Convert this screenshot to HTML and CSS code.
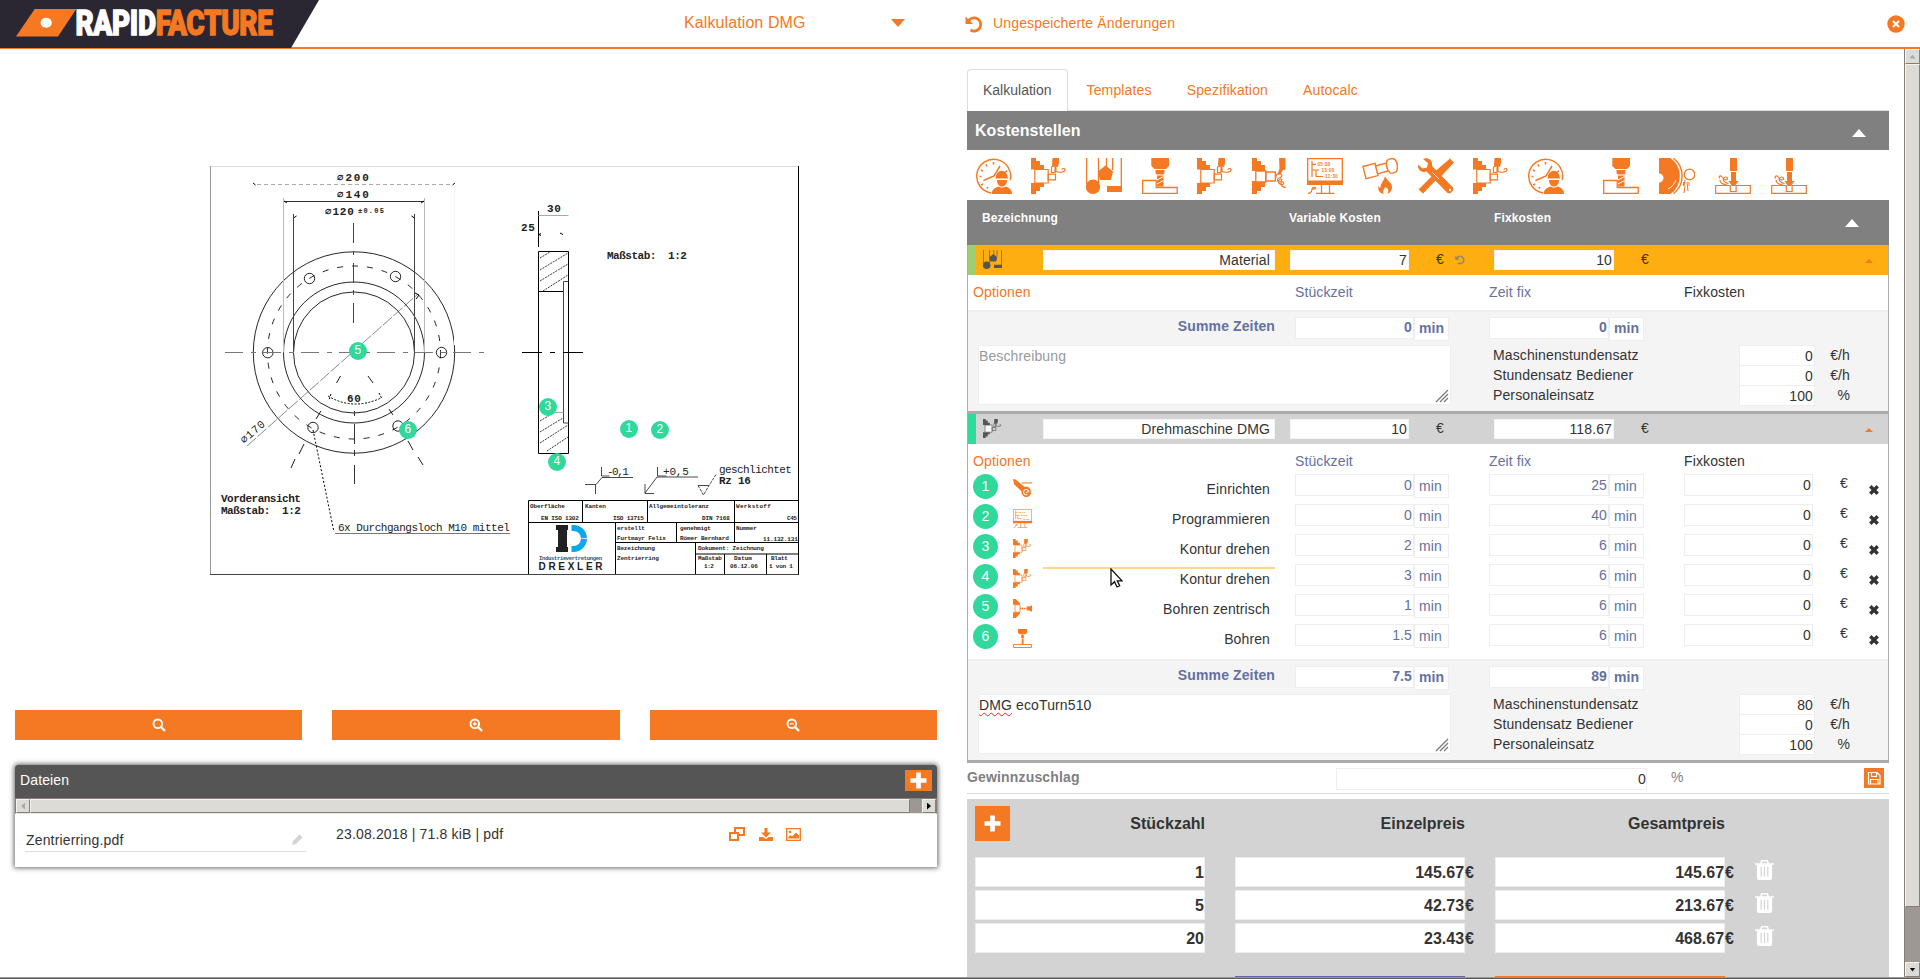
FILE: index.html
```html
<!DOCTYPE html>
<html lang="de">
<head>
<meta charset="utf-8">
<title>Rapidfacture – Kalkulation DMG</title>
<link rel="stylesheet" href="styles.css">
</head>
<body>
<svg class="sprite" aria-hidden="true">
  <symbol id="i-clock" viewBox="0 0 36 36">
    <path d="M15 35A17 17 0 1 1 34.300 22" fill="none" stroke="currentColor" stroke-width="1.400"/>
    <path d="M7.500 22.500 18 18 24 8" fill="none" stroke="currentColor" stroke-width="1.500"/>
    <path d="M17.500 4v2.500M10 6.500l1 2M5 12l2 1M3.500 18.500h2M5 27l2-1M11 30.500l1-1.500M31 13l-2 1" stroke="currentColor" stroke-width="1.600"/>
    <path d="M20 19a5.500 6 0 0 1 11.500 0l.8 1.500h-13zM21 22h10c0 4-2 6.500-5 6.500s-5-2.500-5-6.500zM15.500 36c.5-5 4-6.500 7-7.500 2 1.500 5 1.500 7 0 4 1 6.500 3 6.500 7.500z" fill="currentColor"/>
  </symbol>
  <symbol id="i-turn" viewBox="0 0 36 36">
    <path d="M0 0h5v3h4v4h4v4.500H0zM0 36h5v-3h4v-4h4v-4H0zM21.500 0h6.500v5l-1 4-3-1-2 1-1-2z" fill="currentColor"/>
    <path d="M3.800 11.500h13.400v13.500H3.800z" fill="#fff" fill-opacity=".85" stroke="currentColor" stroke-width="1.200"/>
    <path d="M17.200 16.200h7.300v5.600h-7.300zM20.500 14.500V9l3.500-2v7.500zM25 8v5M24 13c4 2 10 1.500 10-1.200 0-2-3-1.500-3 0" fill="none" stroke="currentColor" stroke-width="1.200"/>
  </symbol>
  <symbol id="i-turn2" viewBox="0 0 36 36">
    <path d="M0 0h5v3h4v4h4v6H0zM0 36h5v-3h4v-4h4v-6H0zM27-1.500h6.500v13l-3 1-2 4h-3l2-6z" fill="currentColor"/>
    <path d="M3.800 13h10v11h-10z" fill="#fff" stroke="currentColor" stroke-width="1.300"/><path d="M13.800 14h9.500v9h-9.500z" fill="none" stroke="currentColor" stroke-width="1.300"/>
    <path d="M24 20c-1-4 3-5 5-4s0 4-2 4-2 4 0 4 4-3 2-3-4 3-1 5 5-1 3-2-3 2-1 4 4 1 4 1" fill="none" stroke="currentColor" stroke-width="1.200"/>
  </symbol>
  <symbol id="i-material" viewBox="0 0 36 36">
    <path d="M.7 0v26M12.500 0v25M20.500 0v10M26.700 0v12M35.300 0v30" stroke="currentColor" stroke-width="1.300"/>
    <circle cx="7" cy="28.800" r="7.200" fill="currentColor"/>
    <path d="M19.500 7.500l7.500 6-2 8.500H14L12 13.500zM21 28h15v6H21z" fill="currentColor"/>
  </symbol>
  <symbol id="i-mill" viewBox="0 0 36 36">
    <path d="M9.300 0h17.700v8l-3 3H12.500l-3.200-3zM13.500 12h9v3l-1 1.500h-7l-1-1.500zM15 17.500h6.500v11H15z" fill="currentColor"/>
    <path d="M15 22l6.500-3.500M15 26l6.500-3.500" stroke="#fff" stroke-width="1"/>
    <path d="M.7 22.500h13.500v7h21v5.800H.7z" fill="none" stroke="currentColor" stroke-width="1.300"/>
  </symbol>
  <symbol id="i-monitor" viewBox="0 0 36 36">
    <path d="M.7.7h34.600v25H.7z" fill="none" stroke="currentColor" stroke-width="1.300"/>
    <path d="M0 22.500h36v4.500H0z" fill="currentColor"/>
    <path d="M5 3v16M5 6.300h4M5 12h7M9 12v6.500h7M14.500 27v8M22.500 27v8M9 35.300h18.500M1 35.300c6 0 2-6 6-6s0 3-2 1" fill="none" stroke="currentColor" stroke-width="1.200"/>
    <g fill="currentColor" font-family="Liberation Sans" font-weight="700" font-size="4.600">
      <text x="10.500" y="8.200" textLength="13">05:00</text><text x="14.500" y="14" textLength="13">13:00</text><text x="18" y="20.200" textLength="13">11:30</text>
    </g>
  </symbol>
  <symbol id="i-heat" viewBox="0 0 36 36">
    <path d="M1 8.500l12-3.200 3 12.300-12 3zM13.500 8l10.500-3 2 8-10.500 3zM25 2.500C28 0 31 .5 33 1.500c3 4 3 8 1.500 12-2 1.500-4 2-6.500 1.300-3-3-4-8-3-12.300z" fill="none" stroke="currentColor" stroke-width="1.400"/>
    <path d="M23 18c1 4 8 7 7 12-.5 3-2 5-4.500 6 2-4 0-6-2-7-2 2-3 4-2 7-4-1-6-4-5-8 .5 1 1 2 2 2-.5-4 3.500-7 4.500-12z" fill="currentColor"/>
  </symbol>
  <symbol id="i-tools" viewBox="0 0 36 36">
    <path d="M5 1c5-2.500 10 1 9 7l21 21.500c1.500 3-2.500 7-5.500 5.500L8.500 13.500C4 15-.5 12 0 6.500l4.500 4 4.500-1 1-4.500z" fill="currentColor"/>
    <path d="M32 .5l4 4L22.500 19l-2 .5L5 35.500.5 31.500 16.500 15.500l.5-2z" fill="currentColor"/>
    <path d="M14.500 14.500l6.500 6.500" stroke="#fff" stroke-width=".8"/>
    <circle cx="32" cy="32" r="1.200" fill="#fff"/>
  </symbol>
  <symbol id="i-grind" viewBox="0 0 36 36">
    <path d="M0 0h11.500a22 22 0 0 1 0 36H0V24.500a4.500 4.500 0 0 0 0-9z" fill="currentColor"/>
    <path d="M14.500 .3a22.500 22.500 0 0 1 0 35.400" fill="none" stroke="currentColor" stroke-width="1.400"/>
    <path d="M17 22c-1.500 4-4 7-8 9" fill="none" stroke="#fff" stroke-width=".9"/>
    <circle cx="30.500" cy="16.500" r="5.300" fill="none" stroke="currentColor" stroke-width="1.300"/>
    <path d="M26 22l-1 6M28 24l1 9M26 28l-1 7M24.500 24l0 4M30 24v4" fill="none" stroke="currentColor" stroke-width="1"/>
  </symbol>
  <symbol id="i-groove" viewBox="0 0 36 36">
    <path d="M15 0h7v13h-7zM16 14h5v9h-5zM13.500 23h10l-3.500 5h-3z" fill="currentColor"/>
    <path d="M.7 27.500h14.600v6h5.800v-6h14.200v7.800H.7zM13.500 25.500c-4-1-6-3-5-5s4-2 4 0-3 2-5-1-4-1-3 1M12 26c-4 1-7-1-7-4" fill="none" stroke="currentColor" stroke-width="1.200"/>
  </symbol>
  <symbol id="i-setup" viewBox="0 0 36 36">
    <path d="M0 0l5 1 17 14c7-1 12 3 12 10 0 6-4 9-8 9-6 0-10-4-10-11L2 10z" fill="currentColor"/>
    <path d="M17 7.500h19" fill="none" stroke="currentColor" stroke-width="2"/>
    <path d="M30 25a5 5 0 1 0-3 4.500M25 26l3-2" fill="none" stroke="#fff" stroke-width="2"/>
  </symbol>
  <symbol id="i-centre" viewBox="0 0 36 36">
    <path d="M0 0h5l8 8v3H0zM0 36h5l8-8v-3H0zM36 12v12l-5-2h-5v-8h5z" fill="currentColor"/>
    <path d="M3.800 11h9.500v14H3.800z" fill="none" stroke="currentColor" stroke-width="1.400"/>
    <path d="M13 18h13" stroke="currentColor" stroke-width="3" stroke-dasharray="3 1"/>
  </symbol>
  <symbol id="i-drill" viewBox="0 0 36 36">
    <path d="M9.300 0h17.700v7l-3 3H12.500l-3.200-3zM15.500 11h5v6h-5zM16.500 18h3.500v11h-3.500z" fill="currentColor"/>
    <path d="M1 29.500h34v5.500H1z" fill="none" stroke="currentColor" stroke-width="1.800"/>
  </symbol>
  <symbol id="i-undo" viewBox="0 0 18 18">
    <path d="M3 6.500A6.600 6.600 0 1 1 5.500 14.500" fill="none" stroke="currentColor" stroke-width="2.700"/>
    <path d="M.5 1v7.500H8z" fill="currentColor"/>
  </symbol>
  <symbol id="i-x" viewBox="0 0 10 10"><path d="M1.300 1.300l7.400 7.400M8.700 1.300L1.300 8.700" stroke="currentColor" stroke-width="3.400"/></symbol>
  <symbol id="i-plus" viewBox="0 0 18 18"><path d="M9 .5v17M.5 9h17" stroke="currentColor" stroke-width="5"/></symbol>
  <symbol id="i-trash" viewBox="0 0 20 22">
    <path d="M2 5h16v14.500a2 2 0 0 1-2 2H4a2 2 0 0 1-2-2z" fill="currentColor"/>
    <path d="M0 4.800h20M6 4.500l1-3.200h6l1 3.200" fill="none" stroke="currentColor" stroke-width="1.600"/>
    <path d="M6.500 7.500v10.500M10 7.500v10.500M13.500 7.500v10.500" stroke="#d3d3d3" stroke-width="1.200"/>
  </symbol>
  <symbol id="i-zoom" viewBox="0 0 14 14"><circle cx="5.800" cy="5.800" r="4.300" fill="none" stroke="currentColor" stroke-width="1.900"/><path d="M9 9l4 4" stroke="currentColor" stroke-width="2.400"/></symbol>
  <symbol id="i-grip" viewBox="0 0 14 14"><path d="M1 13L13 1M5 13l8-8M9 13l4-4" stroke="#777" stroke-width="1.200"/></symbol>
</svg>

<header class="topbar">
  <svg class="logo" width="320" height="48" viewBox="0 0 320 48">
    <path d="M0 0h319L291 48H0z" fill="#2a2732"/>
    <path d="M34.700 9H76.300L58 36.500H16z" fill="#f57822"/>
    <ellipse cx="46.200" cy="22.800" rx="5.600" ry="5" fill="#fff"/>
    <text class="logo-text" x="75.500" y="35.300" textLength="197" lengthAdjust="spacingAndGlyphs" fill="#fff" stroke="#fff">RAPID<tspan fill="#f57822" stroke="#f57822">FACTURE</tspan></text>
  </svg>
  <div class="calc-name">Kalkulation DMG</div>
  <span class="caret-down"></span>
  <svg class="undo-big"><use href="#i-undo"/></svg>
  <span class="unsaved">Ungespeicherte Änderungen</span>
  <svg class="close" viewBox="0 0 18 18"><circle cx="9" cy="9" r="8.700" fill="#f57822"/><path d="M6 6l6 6M12 6l-6 6" stroke="#fff" stroke-width="2.300"/></svg>
</header>

<main class="page">
  <section class="left">
    <div class="sheet">
      <svg class="drawing" width="620" height="420" viewBox="200 160 620 420">
        <g fill="none" stroke="#000" stroke-width="1">
          <path d="M210.500 166.500H798.500" stroke="#ddd"/><path d="M210.500 166v408" stroke="#999"/><path d="M210 574.500H799" stroke="#444"/><path d="M798.500 166v408.500"/>
          <g stroke-width=".85"><circle cx="354" cy="352.500" r="100.700"/><circle cx="354" cy="352.500" r="70.500"/><circle cx="354" cy="352.500" r="60.500"/>
          <circle cx="354" cy="352.500" r="86.500" stroke-dasharray="6 9"/>
          <circle cx="309.500" cy="278.500" r="5.200"/><circle cx="395.500" cy="276.500" r="5.200"/><circle cx="267.800" cy="352.700" r="5.200"/><circle cx="441.500" cy="352.500" r="5.200"/><circle cx="313" cy="427.500" r="5.200"/><circle cx="398" cy="426" r="5.200"/></g>
          <path d="M225 352.500H485" stroke="#777" stroke-dasharray="18 8 5 7"/>
          <path d="M353.500 223v20M353.500 251v4M353.500 263v20M353.500 290v5M353.500 303v20" stroke="#444"/><path d="M354.500 411v5M354.500 424v20M354.500 450v6M354.500 465v19" stroke="#333"/>
          <path d="M257 184.500h195" stroke="#aaa" stroke-dasharray="4 3"/><path d="M283.500 201.500H424.500" stroke="#333"/>
          <path d="M283.500 198V352M424.500 198V352" stroke="#bbb"/><path d="M293.500 214V352M414.500 214V352" stroke="#444"/><path d="M454.500 186V345" stroke="#f8f8f8"/>
          <path d="M247 446L418 294" stroke="#555" stroke-width=".7" stroke-dasharray="12 2"/>
          <path d="M415 293l4 2-3 4M293.500 218l3-2M414.500 218l-3-2M253 183l2.500 2M455 183l-2.500 2M287 203l-3-2M421 203l3-2"/>
          <path d="M340.500 376l-4 7M368 376l5 7M321 411l-5 8M389 409l4 6M304 444l-5 10M295 459l-4 9M408 441l5 9M418 457l5 8" stroke-width=".9"/>
          <path d="M328 396q25 15 53 2M331 394l-2 6M379 393l3 6" stroke-dasharray="2 1.500"/>
          <path d="M313 430L334 532" stroke-dasharray="2 2"/><path d="M335 533.500H510" stroke="#777"/>
          <path d="M538.500 251.500h30v202h-30zM538.500 291.500h25M538.500 211v36"/><path d="M568.500 281.500h-5V423h5" stroke="#444"/><path d="M538.500 215.500h30" stroke="#aaa"/>
          <path d="M563.500 412.500h-14" stroke="#aaa"/>
          <path d="M540 258l10-6M540 270l28-17M540 281l28-17M543 291l25-16M540 421l10-6M540 432l23-14M540 443l28-18M547 451l21-14" stroke-width=".8" stroke-dasharray="2 1"/>
          <path d="M522 352.500h20M550 352.500h5M563 352.500h20M541 233.500l-2 1 2 1M560 233l3 1.500"/>
          <g stroke="#333" stroke-width=".9"><path d="M585 484.500h11l6-7h31M595.500 485v9M601.500 467v9h8M645 493l12-16h41M645 484v9.500h9M657.500 467v9h9"/>
          <path d="M698 485.500h11"/><path d="M698 485.500l5.500 9.500 5.500-9.500 7-11" stroke-dasharray="3 1"/></g>
          <path d="M528.500 574V500.500H798M528.500 522.500H798M582.500 500v22M647.500 500v22M734.500 500v42.500M615.500 522v52M676.500 522v20M615.500 542.500H798M695.500 542v32M695.500 554H798M724.500 554v20M766.500 554v20"/>
        </g>
        <g class="cad">
          <text x="337" y="181" textLength="32">∅200</text><text x="337" y="198" textLength="32">∅140</text><text x="325" y="214.500" textLength="29">∅120</text><text class="cad-s" x="358" y="213" textLength="26">±0.05</text>
          <text x="347" y="401.500" textLength="14">60</text><text x="0" y="0" textLength="29" transform="translate(244 444) rotate(-41)" class="cad-l">∅170</text>
          <text x="547" y="212" textLength="14">30</text><text x="521" y="231" textLength="14">25</text>
          <text x="221" y="501.500" textLength="80">Vorderansicht</text><text x="221" y="514" textLength="80" xml:space="preserve">Maßstab:  1:2</text>
          <text x="607" y="258.500" textLength="80" xml:space="preserve">Maßstab:  1:2</text>
          <text class="cad-l" x="338" y="531" textLength="172">6x Durchgangsloch M10 mittel</text>
          <text class="cad-l" x="607" y="474.500" textLength="22">-0,1</text><text class="cad-l" x="663" y="474.500" textLength="26">+0,5</text>
          <text class="cad-l" x="719" y="472.500" textLength="73">geschlichtet</text><text x="719" y="484" textLength="32">Rz 16</text>
        </g>
        <g class="cad tb">
          <text x="530" y="507.500" textLength="35">Oberfläche</text><text x="541" y="519.500" textLength="38">EN ISO 1302</text>
          <text x="585" y="507.500" textLength="21">Kanten</text><text x="613" y="519.500" textLength="31">ISO 13715</text>
          <text x="649" y="507.500" textLength="60">Allgemeintoleranz</text><text x="702" y="519.500" textLength="28">DIN 7168</text>
          <text x="736" y="507.500" textLength="35">Werkstoff</text><text x="787" y="519.500" textLength="10">C45</text>
          <text x="617" y="529.500" textLength="28">erstellt</text><text x="617" y="539.500" textLength="49">Furtmayr Felix</text>
          <text x="680" y="529.500" textLength="31">genehmigt</text><text x="680" y="539.500" textLength="49">Römer Bernhard</text>
          <text x="736" y="529.500" textLength="21">Nummer</text><text x="763" y="540.500" textLength="35">11.132.131</text>
          <text x="617" y="549.500" textLength="38">Bezeichnung</text><text x="617" y="560" textLength="42">Zentrierring</text>
          <text x="698" y="549.500" textLength="66">Dokument: Zeichnung</text>
          <text x="698" y="560" textLength="24">Maßstab</text><text x="704" y="568" textLength="10">1:2</text>
          <text x="734" y="560" textLength="18">Datum</text><text x="730" y="568" textLength="28">06.12.06</text>
          <text x="771" y="560" textLength="17">Blatt</text><text x="769" y="568" textLength="24">1 von 1</text>
        </g>
        <path d="M556 525h12v5h-1v17h1v5h-12v-5h2v-17h-2z" fill="#222"/>
        <path d="M571.500 528h2a10.500 10.500 0 0 1 0 21h-2" fill="none" stroke="#0aa9ea" stroke-width="6" stroke-dasharray="18 .8 30"/>
        <text x="539" y="560" class="dx-s" textLength="63">Industrievertretungen</text><text x="538.500" y="569.500" class="dx" textLength="64">DREXLER</text>
      </svg>
      <span class="pin pin-5">5</span><span class="pin pin-6">6</span><span class="pin pin-3">3</span><span class="pin pin-4">4</span><span class="pin pin-1">1</span><span class="pin pin-2">2</span>
    </div>
    <div class="zoom-row">
      <button class="zoom"><svg><use href="#i-zoom"/></svg></button>
      <button class="zoom"><svg viewBox="0 0 14 14"><use href="#i-zoom"/><path d="M5.800 3.800v4M3.800 5.800h4" stroke="#fff" stroke-width="1.200"/></svg></button>
      <button class="zoom"><svg viewBox="0 0 14 14"><use href="#i-zoom"/><path d="M3.800 5.800h4" stroke="#fff" stroke-width="1.200"/></svg></button>
    </div>
    <div class="files">
      <div class="files-head"><span>Dateien</span><button class="add-file"><svg><use href="#i-plus"/></svg></button></div>
      <div class="hscroll"><i class="sb-btn"><b class="arr-l"></b></i><i class="sb-thumb"></i><i class="sb-btn"><b class="arr-r"></b></i></div>
      <div class="file">
        <div class="file-name">Zentrierring.pdf<svg width="11" height="11" viewBox="0 0 11 11"><path d="M0 11l1-4 6.500-6.500 3 3L4 10z" fill="#d4d4d4"/></svg></div>
        <div class="file-meta">23.08.2018 | 71.8 kiB | pdf</div>
        <div class="file-actions">
          <svg width="16" height="14" viewBox="0 0 16 14"><path d="M6 1h9v7H6z" fill="#fff" stroke="#f57822" stroke-width="2"/><path d="M1 6h8v7H1z" fill="#fff" stroke="#f57822" stroke-width="2"/></svg>
          <svg width="14" height="13" viewBox="0 0 14 13"><path d="M5.500 0h3v4.500H12L7 9.500 2 4.500h3.500zM0 9h4l3 2 3-2h4v4H0z" fill="#f57822"/></svg>
          <svg width="15" height="13" viewBox="0 0 15 13"><path d="M.7.700h13.600v11.600H.7z" fill="none" stroke="#f57822" stroke-width="1.300"/><circle cx="4" cy="4" r="1.300" fill="#f57822"/><path d="M2.500 10.500V9l2-2 1.500 1.500 4-4 3 3v3z" fill="#f57822"/></svg>
        </div>
      </div>
    </div>
  </section>

  <section class="right">
    <nav class="tabs"><a class="tab active">Kalkulation</a><a class="tab">Templates</a><a class="tab">Spezifikation</a><a class="tab">Autocalc</a></nav>
    <div class="bar"><span>Kostenstellen</span><i class="caret-up"></i></div>
    <div class="machines">
      <svg><use href="#i-clock"/></svg><svg><use href="#i-turn"/></svg><svg><use href="#i-material"/></svg><svg><use href="#i-mill"/></svg><svg><use href="#i-turn"/></svg><svg><use href="#i-turn2"/></svg><svg><use href="#i-monitor"/></svg><svg><use href="#i-heat"/></svg><svg><use href="#i-tools"/></svg><svg><use href="#i-turn"/></svg><svg><use href="#i-clock"/></svg><svg class="split"><use href="#i-mill"/></svg><svg class="wide"><use href="#i-grind"/></svg><svg class="wide"><use href="#i-groove"/></svg><svg class="wide"><use href="#i-groove"/></svg>
    </div>
    <div class="thead"><span>Bezeichnung</span><span>Variable Kosten</span><span>Fixkosten</span><i class="caret-up"></i></div>

    <article class="centre">
      <div class="chead material"><svg class="cicon"><use href="#i-material"/></svg><div class="inp title">Material</div><div class="inp c4">7</div><div class="unit">€<svg class="undo"><use href="#i-undo"/></svg></div><div class="inp c6">10</div><div class="unit">€<i class="caret-s"></i></div></div>
      <div class="opts short"><a>Optionen</a><span class="blue k5">Stückzeit</span><span class="blue k8">Zeit fix</span><span class="k11">Fixkosten</span></div>
      <div class="sum">
        <div class="sumrow"><span class="sumlabel">Summe Zeiten</span><div class="inp t1">0</div><div class="min m1">min</div><div class="inp t2">0</div><div class="min m2">min</div></div>
        <div class="detail"><div class="area ph">Beschreibung<svg><use href="#i-grip"/></svg></div>
          <div class="rates"><span>Maschinenstundensatz</span><div class="inp">0</div><em>€/h</em><span>Stundensatz Bediener</span><div class="inp">0</div><em>€/h</em><span>Personaleinsatz</span><div class="inp">100</div><em>%</em></div></div>
      </div>
    </article>

    <article class="centre">
      <div class="chead lathe"><svg class="cicon"><use href="#i-turn"/></svg><div class="inp title">Drehmaschine DMG</div><div class="inp c4">10</div><div class="unit">€</div><div class="inp c6">118.67</div><div class="unit">€<i class="caret-s"></i></div></div>
      <div class="opts"><a>Optionen</a><span class="blue k5">Stückzeit</span><span class="blue k8">Zeit fix</span><span class="k11">Fixkosten</span></div>
      <div class="ops">
        <div class="op"><b class="num">1</b><svg class="oicon"><use href="#i-setup"/></svg><span class="oname">Einrichten</span><div class="inp t1">0</div><div class="min m1">min</div><div class="inp t2">25</div><div class="min m2">min</div><div class="inp t3">0</div><span class="eur">€</span><svg class="del"><use href="#i-x"/></svg></div>
        <div class="op"><b class="num">2</b><svg class="oicon"><use href="#i-monitor"/></svg><span class="oname">Programmieren</span><div class="inp t1">0</div><div class="min m1">min</div><div class="inp t2">40</div><div class="min m2">min</div><div class="inp t3">0</div><span class="eur">€</span><svg class="del"><use href="#i-x"/></svg></div>
        <div class="op"><b class="num">3</b><svg class="oicon"><use href="#i-turn"/></svg><span class="oname">Kontur drehen</span><div class="inp t1">2</div><div class="min m1">min</div><div class="inp t2">6</div><div class="min m2">min</div><div class="inp t3">0</div><span class="eur">€</span><svg class="del"><use href="#i-x"/></svg></div>
        <div class="op"><b class="num">4</b><svg class="oicon"><use href="#i-turn"/></svg><span class="oname hover">Kontur drehen<svg class="cursor" width="13" height="20" viewBox="0 0 13 20"><path d="M1 1v16l3.500-3.300L7 19l2.700-1.200-2.400-5H12z" fill="#fff" stroke="#111" stroke-width="1.300"/></svg></span><div class="inp t1">3</div><div class="min m1">min</div><div class="inp t2">6</div><div class="min m2">min</div><div class="inp t3">0</div><span class="eur">€</span><svg class="del"><use href="#i-x"/></svg></div>
        <div class="op"><b class="num">5</b><svg class="oicon"><use href="#i-centre"/></svg><span class="oname">Bohren zentrisch</span><div class="inp t1">1</div><div class="min m1">min</div><div class="inp t2">6</div><div class="min m2">min</div><div class="inp t3">0</div><span class="eur">€</span><svg class="del"><use href="#i-x"/></svg></div>
        <div class="op"><b class="num">6</b><svg class="oicon"><use href="#i-drill"/></svg><span class="oname">Bohren</span><div class="inp t1">1.5</div><div class="min m1">min</div><div class="inp t2">6</div><div class="min m2">min</div><div class="inp t3">0</div><span class="eur">€</span><svg class="del"><use href="#i-x"/></svg></div>
      </div>
      <div class="sum">
        <div class="sumrow"><span class="sumlabel">Summe Zeiten</span><div class="inp t1">7.5</div><div class="min m1">min</div><div class="inp t2">89</div><div class="min m2">min</div></div>
        <div class="detail"><div class="area"><u class="typo">DMG</u> ecoTurn510<svg><use href="#i-grip"/></svg></div>
          <div class="rates"><span>Maschinenstundensatz</span><div class="inp">80</div><em>€/h</em><span>Stundensatz Bediener</span><div class="inp">0</div><em>€/h</em><span>Personaleinsatz</span><div class="inp">100</div><em>%</em></div></div>
      </div>
    </article>

    <div class="profit"><strong>Gewinnzuschlag</strong><div class="inp">0</div><span>%</span>
      <svg class="save" width="20" height="20" viewBox="0 0 20 20"><path d="M0 0h20v20H0z" fill="#f57822"/><path d="M4.500 4.500h8.500l3 3v8.500H4.500zM7.500 4.500v4h5v-4M6.500 16v-4.500h7.500v4.500" fill="none" stroke="#fff" stroke-width="1.200"/></svg></div>
    <div class="prices">
      <div class="prow phead"><button class="add"><svg><use href="#i-plus"/></svg></button><span class="h1">Stückzahl</span><span>Einzelpreis</span><span>Gesamtpreis</span></div>
      <div class="prow"><div class="inp">1</div><div class="inp eu">145.67</div><div class="inp eu">145.67</div><svg><use href="#i-trash"/></svg></div>
      <div class="prow"><div class="inp">5</div><div class="inp eu">42.73</div><div class="inp eu">213.67</div><svg><use href="#i-trash"/></svg></div>
      <div class="prow"><div class="inp">20</div><div class="inp eu">23.43</div><div class="inp eu">468.67</div><svg><use href="#i-trash"/></svg></div>
      <div class="strips"><i></i><i class="s-purple"></i><i class="s-orange"></i></div>
    </div>
  </section>

  <aside class="vscroll"><i class="sb-btn"><b class="arr-u"></b></i><i class="sb-thumb"></i><i class="sb-btn"><b class="arr-d"></b></i></aside>
</main>
<footer class="edge"></footer>
</body>
</html>
```
FILE: styles.css
```css
* { box-sizing: border-box; }
body { margin: 0; width: 1920px; height: 979px; overflow: hidden; background: #fff; color: #333; font: 14px/20px "Liberation Sans", Arial, sans-serif; letter-spacing: .12px; }
.sprite { display: none; }
svg { display: block; flex: none; }
button { border: 0; padding: 0; background: #f57822; color: #fff; display: flex; align-items: center; justify-content: center; }

.topbar { height: 49px; border-bottom: 2px solid #f57822; display: flex; color: #f57822; }
.logo { width: 320px; margin-bottom: -1px; }
.logo-text { font: 900 35.500px Roboto, "Liberation Sans", sans-serif; letter-spacing: -.5px; stroke-width: 1.300; }
.calc-name { width: 207px; margin-left: 364px; font-size: 16px; letter-spacing: .1px; line-height: 45px; }
.caret-down { width: 14px; height: 8px; margin-top: 19px; background: #f57822; clip-path: polygon(0 0, 100% 0, 50% 100%); }
.undo-big { width: 18px; height: 19px; margin: 15px 10px 0 60px; }
.unsaved { line-height: 46px; width: 894px; letter-spacing: .16px; }
.close { width: 18px; height: 18px; margin-top: 15px; }

.page { display: flex; height: 928px; }
.left { width: 967px; flex: none; }
.sheet { position: relative; height: 661px; padding: 111px 0 0 200px; }
.cad text { font: 700 11px "Liberation Mono", monospace; fill: #222; }
.cad .cad-l { font-weight: 400; }
.cad .cad-s { font-size: 7px; }
.cad.tb text { font-size: 6px; }
.drawing .dx-s { font: 700 5.500px "Liberation Mono", monospace; fill: #26507a; letter-spacing: 0; }
.drawing .dx { font: 700 10px "Liberation Sans", sans-serif; fill: #222; letter-spacing: 0; }
.pin { position: absolute; width: 18px; height: 18px; border-radius: 50%; background: #30d99b; color: #fff; font-size: 12px; line-height: 17px; text-align: center; }
.pin-5 { left: 349px; top: 293px; } .pin-6 { left: 399px; top: 372px; }
.pin-3 { left: 539px; top: 349px; } .pin-4 { left: 548px; top: 404px; }
.pin-1 { left: 620px; top: 371px; } .pin-2 { left: 651px; top: 372px; }
.zoom-row { display: flex; gap: 30px; padding: 0 30px 0 15px; }
.zoom { flex: 1; height: 30px; }
.zoom svg { width: 14px; height: 14px; overflow: visible; }
.files { margin: 25px 30px 0 15px; height: 102px; border-radius: 3px 3px 0 0; box-shadow: 0 0 5px 1px #666; background: #fff; }
.files-head { height: 33px; background: #555; border-radius: 3px 3px 0 0; color: #fff; display: flex; justify-content: space-between; padding: 5px 5px 0; }
.add-file { width: 27px; height: 21px; }
.add-file svg { width: 17px; height: 17px; }
.hscroll { height: 16px; display: flex; background: #9d9891; border: solid #877f73; border-width: 1px 1px 0; border-bottom: 1px solid #e8e6e3; }
.sb-btn { width: 14px; height: 14px; background: #dcdbd6; border: 1px solid; border-color: #f4f3f0 #877f73 #877f73 #f4f3f0; display: flex; align-items: center; justify-content: center; }
.sb-thumb { background: #dcdbd6; border: 1px solid; border-color: #f4f3f0 #877f73 #877f73 #f4f3f0; }
.hscroll .sb-thumb { width: 880px; margin-right: 12px; }
.arr-l, .arr-r { width: 4px; height: 7px; background: #aaa; clip-path: polygon(100% 0, 100% 100%, 0 50%); }
.arr-r { background: #000; clip-path: polygon(0 0, 0 100%, 100% 50%); }
.file { display: flex; padding-left: 10px; }
.file-name { width: 281px; height: 38px; padding: 16px 3px 0 1px; border-bottom: 1px solid #ddd; display: flex; justify-content: space-between; letter-spacing: .16px; }
.file-name svg { margin-top: 4px; }
.file-meta { width: 423px; flex: none; padding: 10px 0 0 30px; letter-spacing: .16px; }
.file-actions { display: flex; gap: 13.500px; align-items: center; height: 40px; }

.right { width: 922px; flex: none; padding-top: 20px; }
.tabs { display: flex; height: 42px; border-bottom: 1px solid #ddd; color: #f57822; letter-spacing: .15px; }
.tab { padding: 0 15.500px; line-height: 40px; margin-right: 2px; border: 1px solid transparent; }
.tab.active { width: 101px; height: 42px; padding: 0 15px; letter-spacing: 0; border: 1px solid #ddd; border-bottom: 0; border-radius: 4px 4px 0 0; background: #fff; color: #555; }
.bar { height: 39px; background: #808080; color: #fff; font: 700 16px/39px "Liberation Sans", sans-serif; padding: 0 23px 0 8px; display: flex; justify-content: space-between; letter-spacing: .05px; }
.caret-up { width: 14px; height: 8px; background: #fff; clip-path: polygon(50% 0, 100% 100%, 0 100%); }
.bar .caret-up { margin-top: 18px; }
.machines { height: 50px; display: flex; gap: 19.200px; padding: 8px 0 0 9px; color: #f57822; }
.machines svg { width: 36px; height: 36px; overflow: visible; }
.machines .split { margin-left: 20px; }
.machines .wide { margin-left: .8px; }
.thead { height: 45px; background: #808080; color: #fff; font-weight: 700; font-size: 12px; letter-spacing: .12px; line-height: 36px; display: grid; grid-template-columns: 307px 205px 351px 14px; padding-left: 15px; }
.thead .caret-up { margin-top: 19px; }

.centre { border: 1px solid #ababab; border-width: 0 1px 3px; }
.inp { background: #fff; border: 1px solid #eee; text-align: right; padding-right: 1px; white-space: nowrap; }
.chead { height: 30px; display: grid; grid-template-columns: 67px 232px 15px 119px 85px 120px 1fr; padding-top: 5px; border-left: 8px solid; }
.material { background: #ffae12; border-color: #9bcf72; }
.lathe { background: #d3d3d3; border-color: #2fdb9c; }
.chead .inp { height: 20px; line-height: 19px; border-color: #f4f4f4; }
.chead .title { padding-right: 4px; }
.c4 { grid-column: 4; }
.cicon { width: 19px; height: 19px; margin-left: 7px; color: #555; }
.unit { display: flex; padding-left: 27px; line-height: 19px; }
.undo { width: 10px; height: 10px; margin: 5px 0 0 11px; color: #8a8a6a; }
.caret-s { width: 8px; height: 4px; margin: 9px 0 0 216px; background: #f57822; clip-path: polygon(50% 0, 100% 100%, 0 100%); }
.opts, .op, .sumrow { display: grid; grid-template-columns: 40px 30px 232px 20px 119px 35px 40px 120px 35px 40px 129px 27px 1fr; padding-left: 5px; }
.opts { height: 30px; line-height: 34px; }
.opts.short { height: 35px; }
.opts a { color: #f57822; }
.blue { color: #64719f; }
.k5 { grid-column: 5; } .k8 { grid-column: 8; } .k11 { grid-column: 11; }
.ops { height: 185px; }
.op { height: 30px; }
.num { width: 25px; height: 25px; border-radius: 50%; background: #30d99b; color: #fff; font-weight: 400; text-align: center; line-height: 24px; }
.oicon { width: 19px; height: 19px; margin-top: 5px; color: #f57822; }
.oname { text-align: right; padding: 5px 5px 0 0; position: relative; }
.hover::before { content: ""; position: absolute; left: 0; right: 0; top: 3px; height: 2px; background: #ffd68c; }
.cursor { position: absolute; left: 67px; top: 4px; }
.op .inp, .sumrow .inp { height: 22px; line-height: 20px; }
.t1 { grid-column: 5; color: #64719f; } .m1 { grid-column: 6; } .t2 { grid-column: 8; color: #64719f; } .m2 { grid-column: 9; } .t3 { grid-column: 11; }
.min { height: 24px; background: #fff; border: 1px solid #eee; color: #64719f; padding-left: 4px; line-height: 22px; }
.eur { grid-column: 13; grid-row: 1; line-height: 19px; }
.op .del { grid-column: 13; grid-row: 1; width: 10px; height: 10px; margin: 11px 0 0 29px; }
.sum { height: 101px; background: #f4f4f4; border-top: 2px solid #eee; }
.sumrow { height: 33px; padding-top: 5px; font-weight: 700; }
.sumrow .inp { line-height: 19px; }
.sumrow .min { line-height: 21px; }
.sumlabel { grid-column: 3; text-align: right; color: #64719f; line-height: 18px; }
.detail { display: flex; padding-left: 10px; }
.area { width: 473px; height: 60px; background: #fff; border: 1px solid #eee; position: relative; }
.ph { color: #999; }
.area svg { position: absolute; right: 1px; bottom: 1px; width: 14px; height: 14px; }
.typo { text-decoration: underline wavy #e22 1px; text-underline-offset: 2px; }
.rates { margin-left: 42px; display: grid; grid-template-columns: 246px 76px 36px; grid-auto-rows: 20px; }
.rates .inp { height: 21px; }
.rates em { font-style: normal; text-align: right; padding-right: 1px; }

.profit { height: 31px; border-bottom: 1px solid #ddd; display: flex; color: #808080; line-height: 28px; letter-spacing: .16px; }
.profit strong { width: 369px; }
.profit .inp { width: 311px; height: 22px; margin-top: 5px; line-height: 20px; color: #333; padding-right: 0; }
.profit span { width: 217px; padding-left: 24px; }
.save { margin-top: 5px; }
.prices { margin-top: 5px; height: 178px; background: #d3d3d3; padding: 7px 0 0 8px; font: 700 16px/29px "Liberation Sans", sans-serif; letter-spacing: 0; }
.prow { display: grid; grid-template-columns: 230px 230px 230px 20px; column-gap: 30px; height: 33px; }
.prow > span { text-align: right; }
.phead { height: 51px; line-height: 36px; }
.h1 { grid-column: 1; grid-row: 1; }
.add { grid-column: 1; grid-row: 1; width: 35px; height: 35px; }
.add svg { width: 17px; height: 17px; }
.prow .inp { height: 30px; padding-right: 0; }
.eu::after { content: "€"; margin-right: -10px; padding-left: 1px; }
.prow > svg { width: 19px; height: 22px; margin-top: 1.500px; color: #fff; }
.strips { display: grid; grid-template-columns: 230px 230px 230px; gap: 30px; height: 1px; margin-top: 20px; }
.s-purple { background: #6363a5; } .s-orange { background: #f57822; }

.vscroll { width: 16px; margin-left: 15px; border-left: 1px solid #877f73; background: #9d9891; display: flex; flex-direction: column; }
.vscroll .sb-btn { width: 15px; height: 15px; }
.vscroll .sb-thumb { height: 843px; margin-bottom: 55px; }
.arr-u, .arr-d { width: 6px; height: 4px; background: #aaa; clip-path: polygon(50% 0, 100% 100%, 0 100%); }
.arr-d { background: #000; clip-path: polygon(0 0, 100% 0, 50% 100%); }
.edge { height: 2px; background: linear-gradient(#999 50%, #5a5a5a 50%); }
```
